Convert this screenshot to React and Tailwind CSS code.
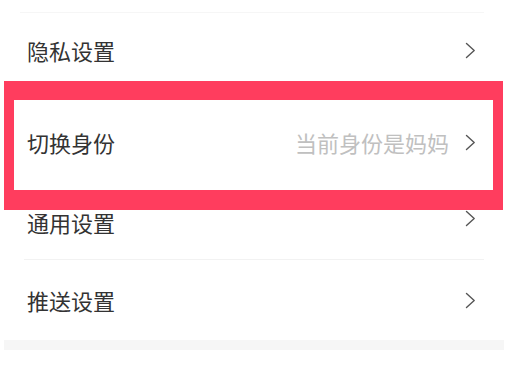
// Settings list with a red highlight frame round the identity row.
function Chevron() {
  return (
    <svg width="11" height="17" viewBox="0 0 11 17" fill="none" className="shrink-0">
      <path
        d="M1.5 1.5 L9.2 8.5 L1.5 15.5"
        stroke="#555"
        strokeWidth="1.4"
        strokeLinecap="round"
        strokeLinejoin="round"
      />
    </svg>
  );
}

function Row({ title, hint, className = '' }) {
  return (
    <div className={`flex items-center justify-between ${className}`}>
      <span className="text-[22px] leading-[24px] text-[#333]">{title}</span>
      <div className="flex items-center gap-4">
        {hint && <span className="text-[22px] leading-[24px] text-[#c0c0c0]">{hint}</span>}
        <Chevron />
      </div>
    </div>
  );
}

export default function App() {
  return (
    <div
      className="h-[380px] w-[518px] overflow-hidden bg-white"
      style={{ fontFamily: '"Noto Sans CJK SC", "Noto Sans", sans-serif' }}
    >
      <div className="pt-3">
        <div className="mx-5 h-px w-[464px] bg-[#f6f6f6]" />
      </div>

      <Row title="隐私设置" className="h-[68px] pl-[27px] pr-[42px] pt-[6px]" />

      <div className="ml-1 w-[499px] border-x-[10px] border-t-[19px] border-b-[20px] border-[#ff3d5e]">
        <Row
          title="切换身份"
          hint="当前身份是妈妈"
          className="h-[90px] items-start pl-[13px] pr-[17px] pt-[30px]"
        />
      </div>

      <Row title="通用设置" className="h-[49px] items-start pl-[27px] pr-[42px]" />
      <div className="ml-6 h-px w-[460px] bg-[#f2f2f2]" />

      <Row title="推送设置" className="h-[80px] pl-[27px] pr-[42px]" />

      <div className="ml-1 h-[10px] w-[500px] bg-[#f6f6f6]" />
    </div>
  );
}
